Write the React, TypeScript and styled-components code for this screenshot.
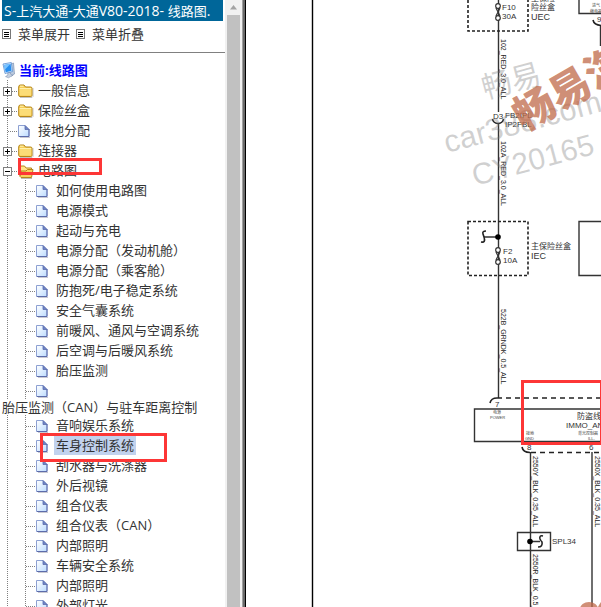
import React from "react";
import styled, { createGlobalStyle } from "styled-components";

const GlobalStyle = createGlobalStyle`
  * { box-sizing: border-box; }
  body {
    margin: 0;
    background: #fff;
    color: #333;
    font: 13px/20px "Open Sans", "Noto Sans CJK SC", sans-serif;
  }
`;

const Page = styled.div`
  display: flex;
  height: 100vh;
  overflow: hidden;
`;

const Sidebar = styled.nav`
  flex: 0 0 225px;
  overflow: hidden;
  white-space: nowrap;
`;

const Title = styled.h1`
  margin: 0 2px;
  padding: 0 2px;
  height: 21px;
  overflow: hidden;
  background: #006699;
  color: #fff;
  font-size: 13px;
  font-weight: 400;
  line-height: 22px;
`;

const Latin = styled.span`
  font-size: 14px;
`;

const Toolbar = styled.div`
  display: flex;
  gap: 6px;
  height: 32px;
  padding: 3px 2px 0;
  border-bottom: 1px solid #808080;
`;

const ToolButton = styled.button`
  display: flex;
  align-items: center;
  gap: 7px;
  height: 20px;
  padding: 0;
  border: 0;
  background: none;
  color: inherit;
  font: inherit;
`;

const Tree = styled.ul`
  margin: 0;
  padding: 0;
  list-style: none;
`;

const Current = styled.div`
  display: flex;
  align-items: center;
  gap: 3px;
  height: 20px;
  margin-top: 7px;
  padding-left: 2px;
  color: #0000ff;
  font-weight: 700;
`;

const Row = styled.li`
  position: relative;
  display: flex;
  align-items: center;
  height: 20px;
`;

const Toggle = styled.button`
  display: flex;
  padding: 0;
  border: 0;
  background: none;
`;

const IconSlot = styled.span`
  display: flex;
  flex: 0 0 18px;
  height: 20px;
`;

const Label = styled.a<{ $selected?: boolean }>`
  height: 19px;
  padding: 0 2px;
  line-height: 18px;
  background: ${(p) => (p.$selected ? "#c1d2ee" : "transparent")};
  color: inherit;
  text-decoration: none;
`;

const WrappedRow = styled.li`
  height: 15px;
  line-height: 15px;

  ${Label} {
    padding: 0 2px;
    line-height: 15px;
  }
`;

const Mark = styled.span<{ $left: number; $top: number; $width: number; $height: number }>`
  position: absolute;
  z-index: 1;
  left: ${(p) => p.$left}px;
  top: ${(p) => p.$top}px;
  width: ${(p) => p.$width}px;
  height: ${(p) => p.$height}px;
  border: 3px solid #fd3636;
  pointer-events: none;
`;

const Scrollbar = styled.div`
  display: flex;
  flex: 0 0 17px;
  flex-direction: column;
  padding: 0 2px;
  background: #f1f1f1;
`;

const ScrollUp = styled.button`
  display: flex;
  height: 15px;
  padding: 0;
  border: 0;
  background: none;
`;

const Thumb = styled.div`
  flex: 1;
  background: #c1c1c1;
`;

const Divider = styled.div`
  flex: 0 0 4px;
  border-left: 1px solid #a0a0a0;
  border-right: 1px solid #000;
  background: #696969;
`;

const Pane = styled.main`
  flex: 1;
  min-width: 0;
  overflow: hidden;
`;

const Drawing = styled.svg`
  display: block;
  width: 100%;
  height: 100%;
  font-family: "Liberation Sans", "Noto Sans CJK SC", sans-serif;
`;

const ListIcon = () => (
  <svg width="9" height="10" viewBox="0 0 9 10" shapeRendering="crispEdges">
    <rect x="0.5" y="0.5" width="8" height="9" fill="#fff" stroke="#777" />
    <path d="M2 3.5h5M2 5.5h5M2 7.5h5" stroke="#000" />
  </svg>
);

const ComputerIcon = () => (
  <svg width="14" height="18" viewBox="0 0 14 18">
    <path d="M9 3l2.5-1 1 11-3 2-2-1z" fill="#b9c9de" stroke="#7087aa" strokeWidth=".6" />
    <path d="M1 3L9.3 1.5l1.2 9L3 12.5z" fill="#dcecff" stroke="#5b8fd0" strokeWidth=".8" />
    <path d="M2 4L8.6 2.8l.9 6.9-5.8 1.6z" fill="#278ff0" />
    <path d="M2 4L8.6 2.8 3 8.5z" fill="#77c3ff" />
    <path d="M5.5 12.2l2.5-.8 1 2.2 2 .6-4.5 2.6-3-1.2L6 14z" fill="#c6d0df" stroke="#7087aa" strokeWidth=".5" />
  </svg>
);

const FolderIcon = () => (
  <svg width="18" height="20" viewBox="0 0 18 20">
    <path d="M2 17.5h12l1-1V8" fill="none" stroke="#c4c4c4" />
    <path d="M.7 7Q.7 5 2.3 5H6l1.6 2H12.6q1.4 0 1.4 1.4v7q0 1.1-1.2 1.1H2Q.7 16.5.7 15z" fill="#f6cd55" stroke="#b5861b" />
    <path d="M1.5 9.2h11.8v6.4H1.8z" fill="#fbdc77" />
    <path d="M1.6 8.6h11.6M2 6.2h3.6" stroke="#fff3b8" />
  </svg>
);

const OpenFolderIcon = () => (
  <svg width="18" height="20" viewBox="0 0 18 20">
    <path d="M3 18.5h11" stroke="#bbb" />
    <path d="M2 16V7.2L3 6h3.5L8 8h5.5v3" fill="#ffe58a" stroke="#b5861b" />
    <path d="M2 16.5L3 11h5l1.5-1.5H15L13.5 17.5H3z" fill="#f7d05f" stroke="#b5861b" />
  </svg>
);

const PageIcon = () => (
  <svg width="18" height="20" viewBox="0 0 18 20">
    <defs>
      <linearGradient id="sheet" x1="0" y1="0" x2="1" y2="1">
        <stop offset="0" stopColor="#fff" />
        <stop offset="1" stopColor="#bddcff" />
      </linearGradient>
    </defs>
    <path d="M2 17.5h10" stroke="#c9c9d2" />
    <path d="M.5 5.5H7l4 4v7H.5z" fill="url(#sheet)" stroke="#8da0d2" />
    <path d="M11 9v7.5H1" fill="none" stroke="#5c6cab" />
    <path d="M7 5.5v4h4z" fill="#6f86c8" stroke="#5c6cab" strokeWidth=".8" />
  </svg>
);

type GuideProps = { branch?: boolean; sign?: "+" | "-" };

const Guide = ({ branch, sign }: GuideProps) => (
  <svg width="18" height="20" viewBox="0 0 18 20" shapeRendering="crispEdges">
    <path d="M7.5 0v20" stroke="#808080" strokeDasharray="1 1" />
    {branch && <path d="M8 11.5h9" stroke="#808080" strokeDasharray="1 1" />}
    {sign && (
      <>
        <rect x="3.5" y="7.5" width="8" height="8" fill="#fff" stroke="#808080" />
        <path d={sign === "+" ? "M5 11.5h5M7.5 9v5" : "M5 11.5h5"} stroke="#000" />
      </>
    )}
  </svg>
);

type Kind = "folder" | "open" | "page";
const icons = { folder: FolderIcon, open: OpenFolderIcon, page: PageIcon };

const topLevel: { text: string; kind: Kind; sign?: "+" | "-" }[] = [
  { text: "一般信息", kind: "folder", sign: "+" },
  { text: "保险丝盒", kind: "folder", sign: "+" },
  { text: "接地分配", kind: "page" },
  { text: "连接器", kind: "folder", sign: "+" },
  { text: "电路图", kind: "open", sign: "-" },
];

const children: { text: string; wrapped?: boolean }[] = [
  { text: "如何使用电路图" },
  { text: "电源模式" },
  { text: "起动与充电" },
  { text: "电源分配（发动机舱）" },
  { text: "电源分配（乘客舱）" },
  { text: "防抱死/电子稳定系统" },
  { text: "安全气囊系统" },
  { text: "前暖风、通风与空调系统" },
  { text: "后空调与后暖风系统" },
  { text: "胎压监测" },
  { text: "胎压监测（CAN）与驻车距离控制", wrapped: true },
  { text: "音响娱乐系统" },
  { text: "车身控制系统" },
  { text: "刮水器与洗涤器" },
  { text: "外后视镜" },
  { text: "组合仪表" },
  { text: "组合仪表（CAN）" },
  { text: "内部照明" },
  { text: "车辆安全系统" },
  { text: "内部照明" },
  { text: "外部灯光" },
];

const TopItem = ({ text, kind, sign }: (typeof topLevel)[number]) => {
  const Icon = icons[kind];
  return (
    <Row>
      {sign ? (
        <Toggle aria-label={text} aria-expanded={sign === "-"}>
          <Guide branch sign={sign} />
        </Toggle>
      ) : (
        <Guide branch />
      )}
      <IconSlot><Icon /></IconSlot>
      <Label href="#">{text}</Label>
      {kind === "open" && <Mark $left={18} $top={-2} $width={84} $height={17} />}
    </Row>
  );
};

const ChildItem = ({ text, wrapped }: (typeof children)[number]) => {
  const selected = text === "车身控制系统";
  return (
    <>
      <Row>
        <Guide />
        <Guide branch />
        <IconSlot><PageIcon /></IconSlot>
        {!wrapped && <Label href="#" $selected={selected}>{text}</Label>}
        {selected && <Mark $left={40} $top={-2} $width={127} $height={29} />}
      </Row>
      {wrapped && <WrappedRow><Label href="#">{text}</Label></WrappedRow>}
    </>
  );
};

const WireLabel = ({ x, y, children: text }: { x: number; y: number; children: string }) => (
  <text transform={`translate(${x} ${y}) rotate(90)`} fontSize="7" fill="#222">{text}</text>
);

const Fuse = ({ x, y }: { x: number; y: number }) => (
  <g transform={`translate(${x} ${y})`} fill="#fff" stroke="#333" strokeWidth="1.2">
    <path d="M-2 2L2 10M2 2L-2 10" />
    <circle cx="0" cy="0" r="2.3" />
    <circle cx="0" cy="12" r="2.3" />
  </g>
);

const Diagram = () => (
  <Drawing viewBox="246 0 355 607" preserveAspectRatio="xMinYMin slice" role="img" aria-label="线路图">
    <g fill="none" stroke="#333" strokeWidth="1.4">
      <path d="M312.5 0V607" stroke="#000" />
      <path d="M498.5 0V112M498.5 123V398" />
      <path d="M530.5 452V607M592 452V607" />
      <path d="M579 0V13.5H601M601 221.5H579V275.5H601M600.5 25V46" />
      <path d="M601 409H474.5V441.5H601" />
      <path d="M517.5 532.5H550.5V550.5H517.5z" />
      <path d="M484 237H498M530 541.5H540" />
    </g>
    <g fill="none" stroke="#222" strokeWidth="1.6" strokeDasharray="3 2">
      <path d="M468 0V31H528V0" />
      <path d="M468 221.5H528V275.5H468z" />
    </g>
    <g fill="none" stroke="#222" strokeWidth="1.6">
      <path d="M497 398H601M531 452.5H601" strokeDasharray="5 4" />
      <path d="M490 403Q491 398 497 398M522 447Q523 452.5 530 452.5" />
      <path d="M492.5 119Q493 123 498 123.5Q503 123 503.5 119M593 20Q594 25 601 25.5" />
      <path d="M486 231Q482 231 483 234Q484 237 484 237Q486 243 481 242" />
      <path d="M543 536Q539 535 540 539Q541 541 542 542Q543 547 538 547" />
    </g>
    <circle cx="498" cy="237" r="2.8" />
    <circle cx="530" cy="541.5" r="2.8" />
    <Fuse x={498} y={6} />
    <Fuse x={498} y={250} />

    <g fill="#333" fontSize="8">
      <text x="502" y="10">F10</text>
      <text x="502" y="19">30A</text>
      <text x="503" y="254">F2</text>
      <text x="503" y="263">10A</text>
      <text x="493" y="119">D3</text>
      <text x="505" y="118">FB2IPL</text>
      <text x="505" y="127">IP2FBL</text>
      <text x="552" y="544">SPL34</text>
      <text x="495" y="407">7</text>
      <text x="527" y="450">8</text>
      <text x="589" y="450">6</text>
      <text x="597" y="22">9</text>
      <text x="531" y="1">主保险</text>
      <text x="531" y="10">险丝盒</text>
      <text x="531" y="20" fontSize="9">UEC</text>
      <text x="531" y="249">主保险丝盒</text>
      <text x="531" y="259" fontSize="9">IEC</text>
      <text x="577" y="419">防盗线</text>
      <text x="566" y="428">IMMO_ANT</text>
    </g>
    <g fill="#444" fontSize="4">
      <text x="493" y="414">电源</text>
      <text x="490" y="419">POWER</text>
      <text x="526" y="435">接地</text>
      <text x="525" y="440">GND</text>
      <text x="578" y="435">背光控制器</text>
      <text x="588" y="440">ILL-</text>
      <text x="592" y="7">进气</text>
      <text x="590" y="13">继电器</text>
    </g>

    <WireLabel x={501} y={39}>102_RED_3.0_ALL</WireLabel>
    <WireLabel x={501} y={141}>102A_RED_3.0_ALL</WireLabel>
    <WireLabel x={501} y={309}>522B_GRNDK_0.5_ALL</WireLabel>
    <WireLabel x={533} y={456}>2550Y_BLK_0.35_ALL</WireLabel>
    <WireLabel x={595} y={456}>2550X_BLK_0.35_ALL</WireLabel>
    <WireLabel x={533} y={554}>2550R_BLK_0.5_ALL</WireLabel>

    <g fill="#777" fillOpacity=".34">
      <text transform="translate(485 99) rotate(-15)" fontSize="30">畅易</text>
      <text transform="translate(447 153) rotate(-15)" fontSize="31">car388.com</text>
      <text transform="translate(475 186) rotate(-15)" fontSize="30">CY20165</text>
    </g>
    <g fill="#c06a4a" fillOpacity=".75" fontWeight="900">
      <text transform="translate(524 132) rotate(-30)" fontSize="41">畅易汽车</text>
      <ellipse cx="589" cy="609" rx="9" ry="7" />
      <path d="M599 605l2-3v5h-3z" />
    </g>
    <rect x="522.5" y="381.5" width="79" height="62" fill="none" stroke="#fd3636" strokeWidth="3" />
  </Drawing>
);

export default function App() {
  return (
    <Page>
      <GlobalStyle />
      <Sidebar>
        <Title>
          <Latin>S-</Latin>上汽大通<Latin>-</Latin>大通<Latin>V80-2018- </Latin>线路图<Latin>.</Latin>
        </Title>
        <Toolbar>
          <ToolButton><ListIcon />菜单展开</ToolButton>
          <ToolButton><ListIcon />菜单折叠</ToolButton>
        </Toolbar>
        <Current><ComputerIcon />当前:线路图</Current>
        <Tree>
          {topLevel.map((item) => <TopItem key={item.text} {...item} />)}
          {children.map((item, i) => <ChildItem key={i} {...item} />)}
        </Tree>
      </Sidebar>
      <Scrollbar>
        <ScrollUp aria-label="向上滚动">
          <svg width="13" height="15" viewBox="0 0 13 15"><path d="M3 9.5L6.5 5 10 9.5z" fill="#a3a3a3" /></svg>
        </ScrollUp>
        <Thumb />
      </Scrollbar>
      <Divider />
      <Pane><Diagram /></Pane>
    </Page>
  );
}
